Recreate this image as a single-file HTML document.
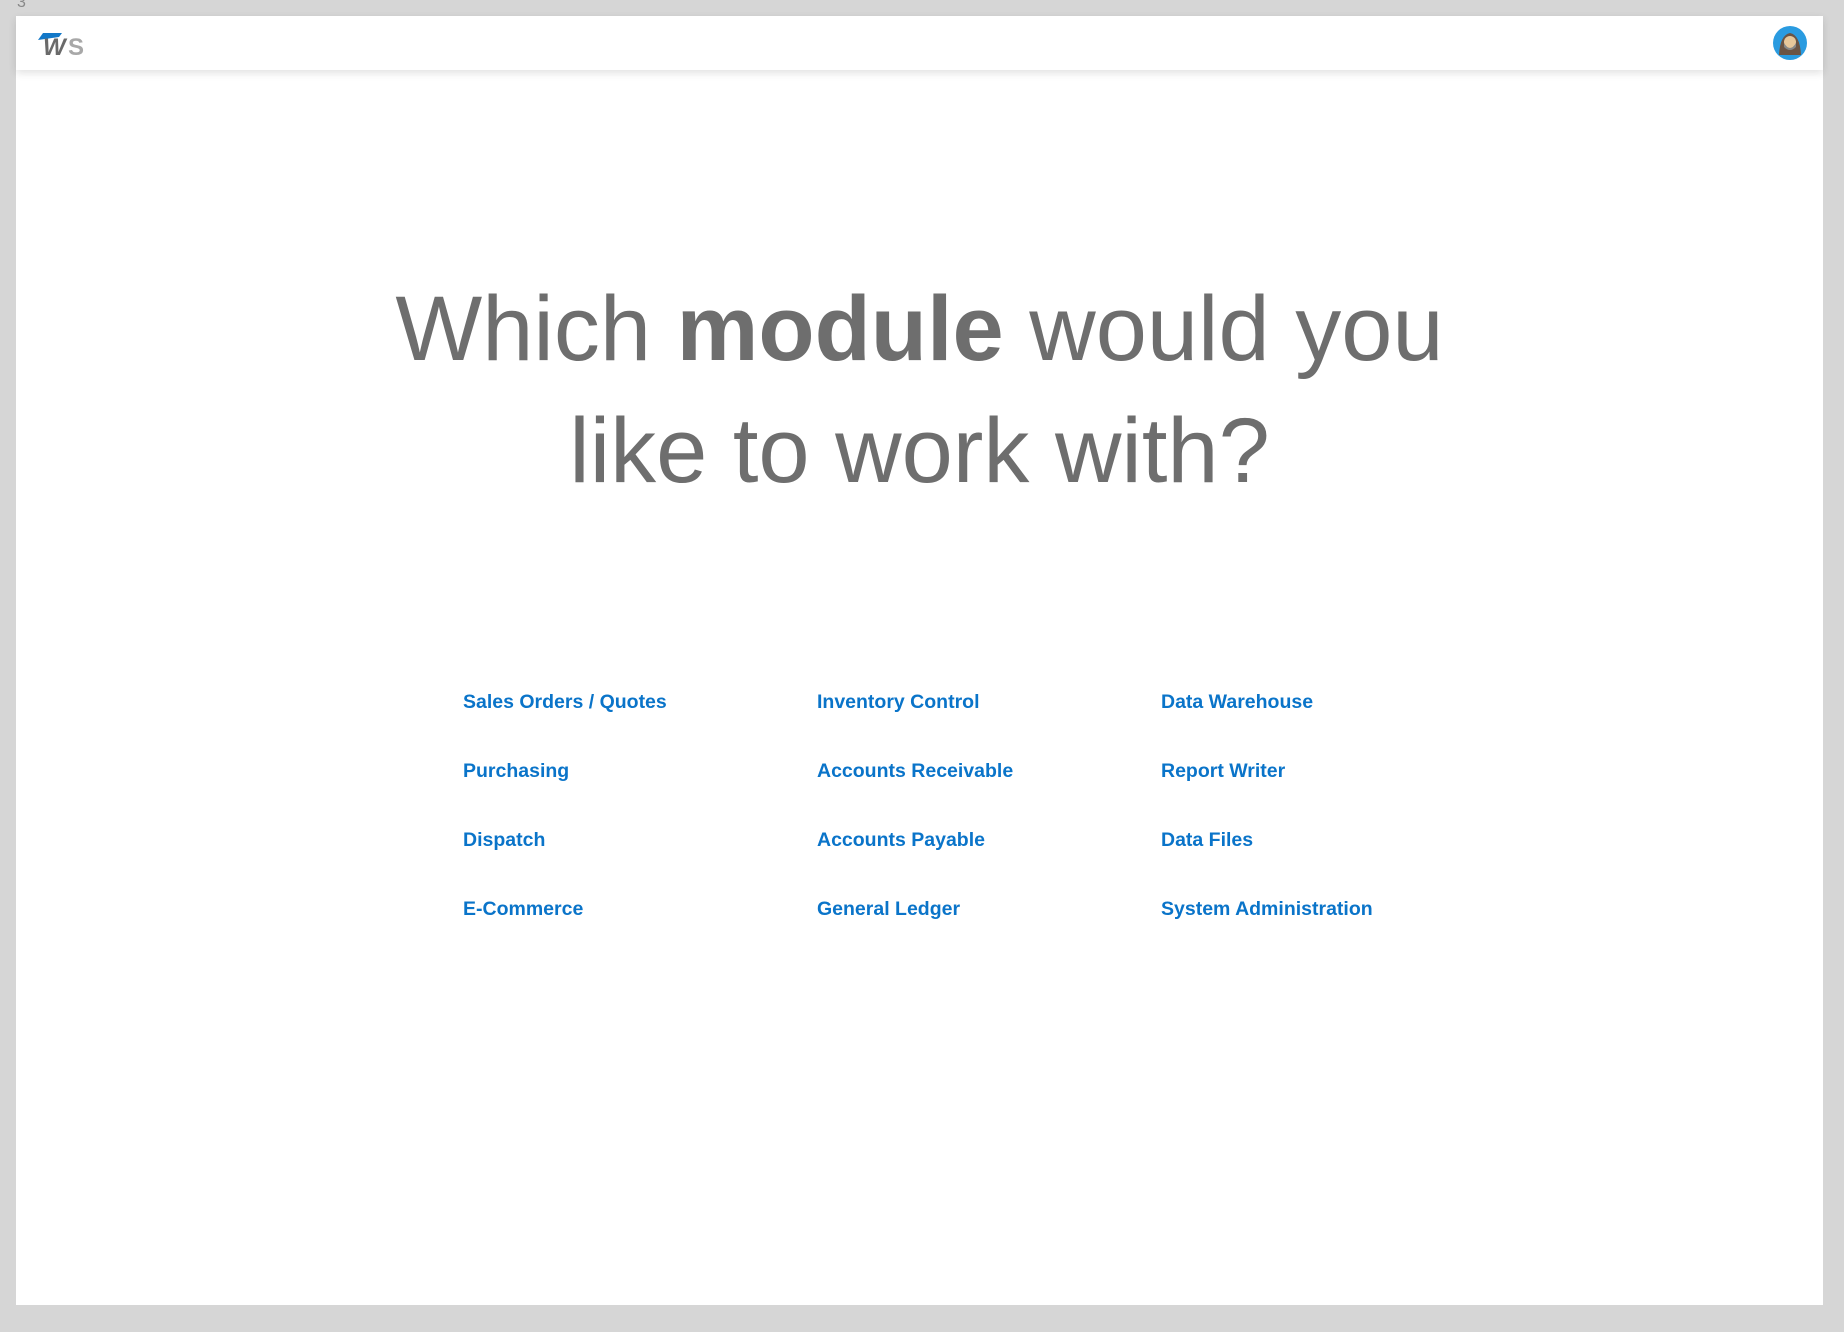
<!DOCTYPE html>
<html><head><meta charset="utf-8"><style>
html,body{margin:0;padding:0;}
body{width:1844px;height:1332px;background:#d6d6d6;position:relative;overflow:hidden;font-family:"Liberation Sans",sans-serif;}
.num{position:absolute;left:17px;top:-6px;font-size:16px;color:#888;}
.panel{position:absolute;left:16px;top:16px;width:1807px;height:1289px;background:#fff;}
.hdr{position:absolute;left:0;top:0;width:100%;height:54px;background:#fff;box-shadow:0 3px 8px rgba(0,0,0,0.12);}
h1{position:absolute;left:0;width:100%;text-align:center;margin:0;font-weight:normal;color:#6e6e6e;font-size:92px;letter-spacing:0px;}
h1 b{font-weight:bold;}
.l{position:absolute;font-size:19.5px;font-weight:bold;color:#0a74c9;white-space:nowrap;}
</style></head><body>
<div class="num">3</div>
<div class="panel">
<div class="hdr">
<svg style="position:absolute;left:22px;top:15px" width="54" height="26" viewBox="0 0 54 26">
<polygon points="0,9 5,2 24,2 21,6" fill="#1278c8"/>
<text x="5" y="24" font-family="Liberation Sans" font-weight="bold" font-size="24" fill="#6a6a6a" letter-spacing="-2" font-style="italic">W</text>
<text x="30" y="24" font-family="Liberation Sans" font-weight="bold" font-size="24" fill="#a8a8a8">S</text>
</svg>
<svg style="position:absolute;left:1756px;top:9px" width="36" height="36" viewBox="0 0 36 36">
<circle cx="18" cy="18" r="17" fill="#2a9be0"/>
<path d="M7,30 Q8,10 18,8 Q28,10 29,30 Z" fill="#6b5444"/>
<circle cx="18" cy="17" r="6" fill="#e8c79a"/>
<path d="M12,18 Q18,28 24,18 L24,22 Q18,28 12,22Z" fill="#888"/>
</svg>
</div>
<h1 style="top:261px;">Which <b>module</b> would you</h1>
<h1 style="top:383px;">like to work with?</h1>
</div>
<div class="l" style="left:463px;top:691px">Sales Orders / Quotes</div>
<div class="l" style="left:463px;top:760px">Purchasing</div>
<div class="l" style="left:463px;top:829px">Dispatch</div>
<div class="l" style="left:463px;top:898px">E-Commerce</div>
<div class="l" style="left:817px;top:691px">Inventory Control</div>
<div class="l" style="left:817px;top:760px">Accounts Receivable</div>
<div class="l" style="left:817px;top:829px">Accounts Payable</div>
<div class="l" style="left:817px;top:898px">General Ledger</div>
<div class="l" style="left:1161px;top:691px">Data Warehouse</div>
<div class="l" style="left:1161px;top:760px">Report Writer</div>
<div class="l" style="left:1161px;top:829px">Data Files</div>
<div class="l" style="left:1161px;top:898px">System Administration</div>
</body></html>
